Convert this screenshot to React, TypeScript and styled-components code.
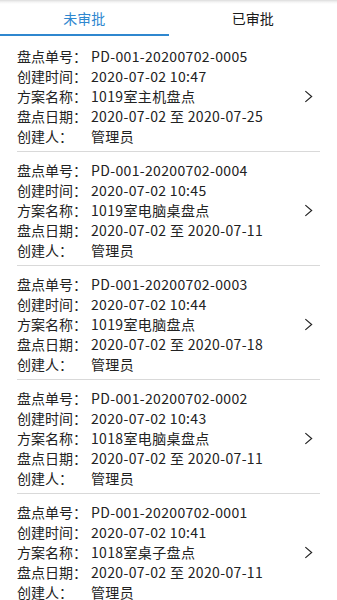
import { useState } from 'react';
import styled, { createGlobalStyle } from 'styled-components';

interface StockTake {
  code: string;
  createdAt: string;
  planName: string;
  startDate: string;
  endDate: string;
  creator: string;
}

const pending: StockTake[] = [
  {
    code: 'PD-001-20200702-0005',
    createdAt: '2020-07-02 10:47',
    planName: '1019室主机盘点',
    startDate: '2020-07-02',
    endDate: '2020-07-25',
    creator: '管理员',
  },
  {
    code: 'PD-001-20200702-0004',
    createdAt: '2020-07-02 10:45',
    planName: '1019室电脑桌盘点',
    startDate: '2020-07-02',
    endDate: '2020-07-11',
    creator: '管理员',
  },
  {
    code: 'PD-001-20200702-0003',
    createdAt: '2020-07-02 10:44',
    planName: '1019室电脑盘点',
    startDate: '2020-07-02',
    endDate: '2020-07-18',
    creator: '管理员',
  },
  {
    code: 'PD-001-20200702-0002',
    createdAt: '2020-07-02 10:43',
    planName: '1018室电脑桌盘点',
    startDate: '2020-07-02',
    endDate: '2020-07-11',
    creator: '管理员',
  },
  {
    code: 'PD-001-20200702-0001',
    createdAt: '2020-07-02 10:41',
    planName: '1018室桌子盘点',
    startDate: '2020-07-02',
    endDate: '2020-07-11',
    creator: '管理员',
  },
];

const tabs = ['未审批', '已审批'];

export default function App() {
  const [activeTab, setActiveTab] = useState(0);
  const list = activeTab === 0 ? pending : [];

  return (
    <>
      <GlobalStyle />
      <Page>
        <TabBar>
          {tabs.map((tab, i) => (
            <Tab key={tab} $active={i === activeTab} onClick={() => setActiveTab(i)}>
              {tab}
            </Tab>
          ))}
        </TabBar>
        <List>
          {list.map((item) => (
            <Card key={item.code}>
              <Fields>
                <Row>
                  <Label>盘点单号：</Label>
                  <Value>{item.code}</Value>
                </Row>
                <Row>
                  <Label>创建时间：</Label>
                  <Value>{item.createdAt}</Value>
                </Row>
                <Row>
                  <Label>方案名称：</Label>
                  <Value>{item.planName}</Value>
                </Row>
                <Row>
                  <Label>盘点日期：</Label>
                  <Value>
                    {item.startDate} 至 {item.endDate}
                  </Value>
                </Row>
                <Row>
                  <Label>创建人：</Label>
                  <Value>{item.creator}</Value>
                </Row>
              </Fields>
              <Chevron viewBox="0 0 10 14" aria-hidden="true">
                <path d="M1.5 1 L8.5 7 L1.5 13" />
              </Chevron>
            </Card>
          ))}
        </List>
      </Page>
    </>
  );
}

const GlobalStyle = createGlobalStyle`
  html, body {
    margin: 0;
    padding: 0;
    background: #fff;
  }
  body {
    font-family: "Noto Sans CJK SC", "Noto Sans", sans-serif;
    color: #222;
  }
`;

const Page = styled.div`
  width: 100%;
  min-height: 100vh;
  background: #fff;
`;

const TabBar = styled.div`
  display: flex;
  height: 36px;
  background: linear-gradient(to bottom, #dcdcdc 0, #f4f4f4 2px, #fff 4px);
`;

const Tab = styled.div<{ $active: boolean }>`
  flex: 1;
  display: flex;
  align-items: center;
  justify-content: center;
  padding-top: 1px;
  font-size: 14px;
  color: ${({ $active }) => ($active ? '#2f87cf' : '#1a1a1a')};
  border-bottom: 2px solid ${({ $active }) => ($active ? '#2f87cf' : 'transparent')};
  cursor: pointer;
`;

const List = styled.div`
  display: flex;
  flex-direction: column;
`;

const Card = styled.div`
  display: flex;
  align-items: center;
  margin: 0 17px;
  padding: 10px 7px 5px 0;
  border-bottom: 1px solid #d9d9d9;

  & + & {
    padding-top: 8px;
  }
`;

const Fields = styled.div`
  flex: 1;
  display: flex;
  flex-direction: column;
`;

const Row = styled.div`
  display: flex;
  height: 20px;
  align-items: center;
  font-size: 14px;
  line-height: 20px;
`;

const Label = styled.span`
  width: 74px;
  flex-shrink: 0;
  color: #222;
  white-space: nowrap;
`;

const Value = styled.span`
  color: #222;
  white-space: nowrap;
  letter-spacing: 0.35px;
`;

const Chevron = styled.svg`
  width: 9px;
  height: 13px;
  fill: none;
  stroke: #222;
  stroke-width: 1.3;
`;
